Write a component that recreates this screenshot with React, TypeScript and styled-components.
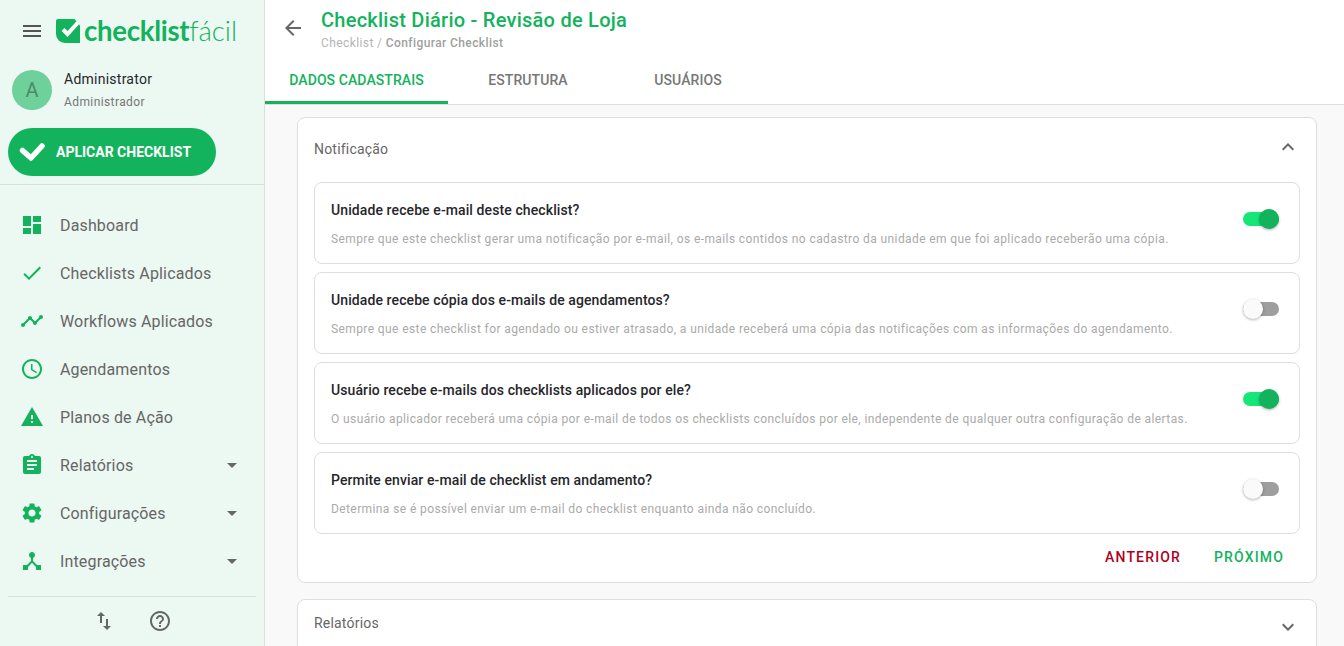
import styled, { createGlobalStyle } from "styled-components";
import {
  MdAccessTime,
  MdArrowBack,
  MdArrowDropDown,
  MdAssignment,
  MdCheck,
  MdDashboard,
  MdDeviceHub,
  MdExpandLess,
  MdExpandMore,
  MdHelpOutline,
  MdMenu,
  MdSettings,
  MdSwapVert,
  MdTimeline,
  MdWarning,
} from "react-icons/md";
import type { IconType } from "react-icons";

const GREEN = "#12b35c";

const GlobalStyle = createGlobalStyle`
  html, body {
    margin: 0;
    padding: 0;
    height: 646px;
    overflow: hidden;
    font-family: Roboto, "Liberation Sans", sans-serif;
    background: #f9f9f9;
  }
  * { box-sizing: border-box; }
`;

const Page = styled.div`
  display: flex;
  height: 646px;
  overflow: hidden;
`;

const Sidebar = styled.aside`
  flex: 0 0 265px;
  background: #ecf8f2;
  border-right: 1px solid #dcdfde;
  display: flex;
  flex-direction: column;
`;

const BrandRow = styled.div`
  display: flex;
  align-items: center;
  height: 62px;
  padding-left: 20px;
  color: #555;
`;

const BrandName = styled.div`
  margin-left: 4px;
  font-family: Lato, sans-serif;
  font-size: 27.6px;
  line-height: 30px;
  color: ${GREEN};
  white-space: nowrap;
  font-weight: 700;
  letter-spacing: -0.3px;
`;

const BrandLight = styled.span`
  font-weight: 300;
  letter-spacing: 0;
`;

const UserRow = styled.div`
  display: flex;
  align-items: center;
  padding-left: 12px;
  height: 56px;
`;

const Avatar = styled.div`
  width: 40px;
  height: 40px;
  border-radius: 50%;
  background: #6ed19c;
  color: #4d8a68;
  font-size: 20px;
  display: flex;
  align-items: center;
  justify-content: center;
`;

const UserText = styled.div`
  margin-left: 12px;
  display: flex;
  flex-direction: column;
  gap: 6px;
`;

const UserName = styled.div`
  font-size: 14px;
  line-height: 18px;
  color: #26262b;
  letter-spacing: 0.25px;
`;

const UserRole = styled.div`
  font-size: 12px;
  line-height: 16px;
  color: #777;
  letter-spacing: 0.4px;
`;

const ApplyButton = styled.button`
  margin: 10px 0 0 8px;
  width: 208px;
  height: 48px;
  border: 0;
  border-radius: 24px;
  background: ${GREEN};
  color: #fff;
  font-family: inherit;
  font-weight: 700;
  font-size: 14px;
  display: flex;
  align-items: center;
  padding: 0 0 0 11px;
  gap: 11px;
`;

const Divider = styled.div<{ $inset?: boolean }>`
  height: 1px;
  background: #d6dfda;
  margin: ${({ $inset }) => ($inset ? "11px 8px 0" : "8px 0 0")};
`;

const Menu = styled.nav`
  margin-top: 16px;
  display: flex;
  flex-direction: column;
`;

const MenuItem = styled.div`
  height: 48px;
  display: flex;
  align-items: center;
  padding: 0 20px;
  color: #666;
  font-size: 16px;
  letter-spacing: 0.15px;
`;

const MenuIcon = styled.span`
  width: 24px;
  height: 24px;
  color: ${GREEN};
  display: flex;
  margin-right: 16px;
`;

const MenuLabel = styled.span`
  flex: 1;
`;

const Caret = styled.span`
  display: flex;
  color: #666;
`;

const FooterIcons = styled.div`
  display: flex;
  justify-content: center;
  gap: 32px;
  padding-top: 12px;
  color: #666;
`;

const Main = styled.main`
  flex: 1;
  min-width: 0;
  display: flex;
  flex-direction: column;
`;

const Header = styled.header`
  background: #fff;
  height: 105px;
  border-bottom: 1px solid #dedede;
  display: flex;
  flex-direction: column;
`;

const TitleRow = styled.div`
  height: 62px;
  display: flex;
  padding: 8px 0 0 16px;
`;

const BackIcon = styled.span`
  display: flex;
  color: #666;
  margin: 8px 16px 0 0;
`;

const Title = styled.h1`
  margin: 0;
  font-size: 20px;
  line-height: 24px;
  font-weight: 500;
  color: ${GREEN};
  letter-spacing: 0.25px;
`;

const Crumbs = styled.div`
  margin-top: 3px;
  font-size: 12px;
  line-height: 16px;
  color: #b4b4b4;
  letter-spacing: 0.4px;
`;

const CrumbStrong = styled.span`
  color: #a0a0a0;
  font-weight: 500;
`;

const Tabs = styled.div`
  display: flex;
  height: 42px;
`;

const Tab = styled.div<{ $active?: boolean; $width: number }>`
  width: ${({ $width }) => $width}px;
  display: flex;
  align-items: center;
  justify-content: center;
  padding-bottom: 3px;
  font-size: 14px;
  font-weight: 500;
  letter-spacing: 0.08px;
  color: ${({ $active }) => ($active ? GREEN : "#777")};
  border-bottom: 3px solid ${({ $active }) => ($active ? GREEN : "transparent")};
`;

const Content = styled.div`
  flex: 1;
  min-height: 0;
  overflow: hidden;
  padding: 12px 27px 0 32px;
  display: flex;
  flex-direction: column;
  gap: 16px;
`;

const Card = styled.section`
  background: #fff;
  border: 1px solid #dedede;
  border-radius: 8px;
  padding: 0 16px;
  flex: none;
`;

const CardHead = styled.div<{ $collapsed?: boolean }>`
  height: 64px;
  display: flex;
  align-items: ${({ $collapsed }) => ($collapsed ? "flex-start" : "center")};
  justify-content: space-between;
  padding: ${({ $collapsed }) => ($collapsed ? "15px 0 0" : "0 0 2px")};
  font-size: 14px;
  color: #666;
  letter-spacing: 0.2px;
`;

const Chevron = styled.span<{ $drop?: boolean }>`
  display: flex;
  color: #666;
  margin-top: ${({ $drop }) => ($drop ? "0" : "-4px")};
`;

const OptionList = styled.div`
  display: flex;
  flex-direction: column;
  gap: 8px;
`;

const Option = styled.div`
  height: 82px;
  border: 1px solid #dedede;
  border-radius: 8px;
  padding: 0 20px 0 16px;
  display: flex;
  align-items: center;
  justify-content: space-between;
`;

const OptionTitle = styled.div`
  font-size: 14px;
  line-height: 20px;
  font-weight: 500;
  color: #26262b;
  letter-spacing: 0.1px;
`;

const OptionHint = styled.div`
  margin-top: 11px;
  font-size: 12px;
  line-height: 16px;
  color: #aaa;
  letter-spacing: 0.4px;
`;

const Switch = styled.div<{ $on: boolean }>`
  position: relative;
  width: 36px;
  height: 14px;
  margin-bottom: 8px;
  border-radius: 7px;
  background: ${({ $on }) => ($on ? "#16e677" : "#9e9e9e")};

  &::after {
    content: "";
    position: absolute;
    top: -3px;
    left: ${({ $on }) => ($on ? "16px" : "0")};
    width: 20px;
    height: 20px;
    border-radius: 50%;
    background: ${({ $on }) => ($on ? GREEN : "#fafafa")};
    box-shadow: 0 1px 3px rgba(0, 0, 0, 0.3);
  }
`;

const Actions = styled.div`
  height: 48px;
  display: flex;
  align-items: center;
  justify-content: flex-end;
  gap: 33px;
  padding: 0 16px 2px 0;
`;

const ActionButton = styled.span<{ $color: string }>`
  font-size: 14px;
  font-weight: 500;
  letter-spacing: 1.15px;
  color: ${({ $color }) => $color};
`;

const menuItems: { label: string; icon: IconType; caret?: boolean }[] = [
  { label: "Dashboard", icon: MdDashboard },
  { label: "Checklists Aplicados", icon: MdCheck },
  { label: "Workflows Aplicados", icon: MdTimeline },
  { label: "Agendamentos", icon: MdAccessTime },
  { label: "Planos de Ação", icon: MdWarning },
  { label: "Relatórios", icon: MdAssignment, caret: true },
  { label: "Configurações", icon: MdSettings, caret: true },
  { label: "Integrações", icon: MdDeviceHub, caret: true },
];

const options = [
  {
    title: "Unidade recebe e-mail deste checklist?",
    hint: "Sempre que este checklist gerar uma notificação por e-mail, os e-mails contidos no cadastro da unidade em que foi aplicado receberão uma cópia.",
    on: true,
  },
  {
    title: "Unidade recebe cópia dos e-mails de agendamentos?",
    hint: "Sempre que este checklist for agendado ou estiver atrasado, a unidade receberá uma cópia das notificações com as informações do agendamento.",
    on: false,
  },
  {
    title: "Usuário recebe e-mails dos checklists aplicados por ele?",
    hint: "O usuário aplicador receberá uma cópia por e-mail de todos os checklists concluídos por ele, independente de qualquer outra configuração de alertas.",
    on: true,
  },
  {
    title: "Permite enviar e-mail de checklist em andamento?",
    hint: "Determina se é possível enviar um e-mail do checklist enquanto ainda não concluído.",
    on: false,
  },
];

const LogoMark = () => (
  <svg width="24" height="24" viewBox="0 0 24 24">
    <path d="M2 0h16.5L24 6.5V24H9a9 9 0 0 1-9-9V2a2 2 0 0 1 2-2z" fill={GREEN} />
    <path d="M7 10.5l4.5 4.5L22 3.5" fill="none" stroke="#fff" strokeWidth="4" />
  </svg>
);

const BoldCheck = () => (
  <svg width="26" height="22" viewBox="0 0 26 22">
    <path d="M3.5 9.5L12 17 23 5" fill="none" stroke="#fff" strokeWidth="5.5" strokeLinecap="round" strokeLinejoin="round" />
  </svg>
);

export default function App() {
  return (
    <>
      <GlobalStyle />
      <Page>
        <Sidebar>
          <BrandRow>
            <MdMenu size={24} style={{ marginRight: 12 }} />
            <LogoMark />
            <BrandName>
              checklist<BrandLight>fácil</BrandLight>
            </BrandName>
          </BrandRow>
          <UserRow>
            <Avatar>A</Avatar>
            <UserText>
              <UserName>Administrator</UserName>
              <UserRole>Administrador</UserRole>
            </UserText>
          </UserRow>
          <ApplyButton>
            <BoldCheck />
            APLICAR CHECKLIST
          </ApplyButton>
          <Divider />
          <Menu>
            {menuItems.map(({ label, icon: Icon, caret }) => (
              <MenuItem key={label}>
                <MenuIcon>
                  <Icon size={24} />
                </MenuIcon>
                <MenuLabel>{label}</MenuLabel>
                {caret && (
                  <Caret>
                    <MdArrowDropDown size={24} />
                  </Caret>
                )}
              </MenuItem>
            ))}
          </Menu>
          <Divider $inset />
          <FooterIcons>
            <MdSwapVert size={24} />
            <MdHelpOutline size={24} />
          </FooterIcons>
        </Sidebar>
        <Main>
          <Header>
            <TitleRow>
              <BackIcon>
                <MdArrowBack size={24} />
              </BackIcon>
              <div>
                <Title>Checklist Diário - Revisão de Loja</Title>
                <Crumbs>
                  Checklist / <CrumbStrong>Configurar Checklist</CrumbStrong>
                </Crumbs>
              </div>
            </TitleRow>
            <Tabs>
              <Tab $active $width={183}>DADOS CADASTRAIS</Tab>
              <Tab $width={160}>ESTRUTURA</Tab>
              <Tab $width={160}>USUÁRIOS</Tab>
            </Tabs>
          </Header>
          <Content>
            <Card>
              <CardHead>
                Notificação
                <Chevron>
                  <MdExpandLess size={24} />
                </Chevron>
              </CardHead>
              <OptionList>
                {options.map((o) => (
                  <Option key={o.title}>
                    <div>
                      <OptionTitle>{o.title}</OptionTitle>
                      <OptionHint>{o.hint}</OptionHint>
                    </div>
                    <Switch $on={o.on} />
                  </Option>
                ))}
              </OptionList>
              <Actions>
                <ActionButton $color="#b00020">ANTERIOR</ActionButton>
                <ActionButton $color={GREEN}>PRÓXIMO</ActionButton>
              </Actions>
            </Card>
            <Card>
              <CardHead $collapsed>
                Relatórios
                <Chevron $drop>
                  <MdExpandMore size={24} />
                </Chevron>
              </CardHead>
            </Card>
          </Content>
        </Main>
      </Page>
    </>
  );
}
